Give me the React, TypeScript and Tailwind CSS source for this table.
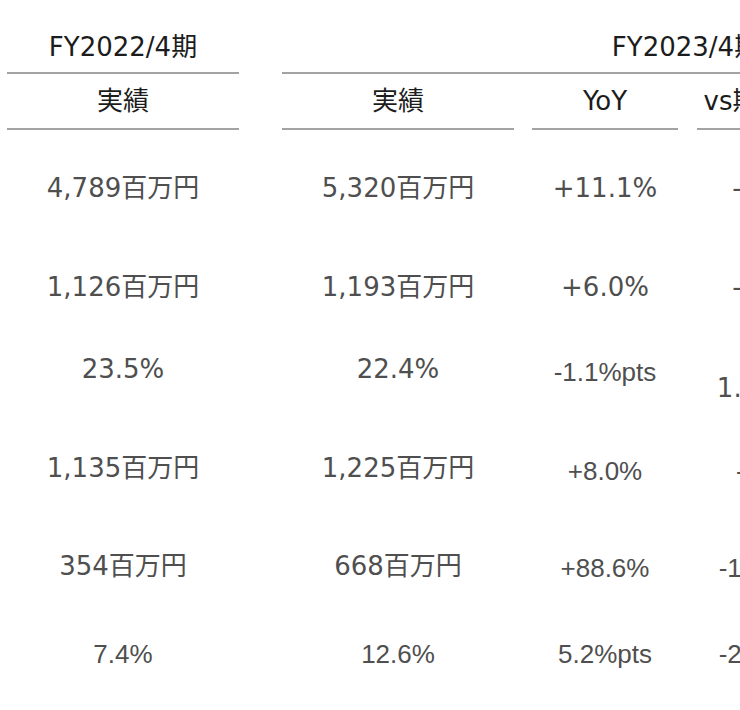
import React from 'react';

type Cell = { text: string; arial?: boolean; extra?: string };

interface Row {
  cls: string;
  cells: Cell[];
}

const rows: Row[] = [
  {
    cls: 'h-[56px] mt-[30px]',
    cells: [
      { text: '4,789百万円' },
      { text: '5,320百万円' },
      { text: '+11.1%' },
      { text: '-3.3%' },
    ],
  },
  {
    cls: 'h-[56px] mt-[43px]',
    cells: [
      { text: '1,126百万円' },
      { text: '1,193百万円' },
      { text: '+6.0%' },
      { text: '-0.6%' },
    ],
  },
  {
    cls: 'h-[56px] mt-[26px]',
    cells: [
      { text: '23.5%' },
      { text: '22.4%' },
      { text: '-1.1%pts', arial: true, extra: 'pt-[6px]' },
      { text: '1.1%pts', extra: 'pt-[38px]' },
    ],
  },
  {
    cls: 'h-[56px] mt-[43px]',
    cells: [
      { text: '1,135百万円' },
      { text: '1,225百万円' },
      { text: '+8.0%', arial: true, extra: 'pt-[6px]' },
      { text: '-2.0%', arial: true, extra: 'pt-[6px]' },
    ],
  },
  {
    cls: 'h-[56px] mt-[42px]',
    cells: [
      { text: '354百万円' },
      { text: '668百万円' },
      { text: '+88.6%', arial: true, extra: 'pt-[4px]' },
      { text: '-1.0%pts', arial: true, extra: 'pt-[4px]' },
    ],
  },
  {
    cls: 'h-[56px] mt-[32px]',
    cells: [
      { text: '7.4%', arial: true },
      { text: '12.6%', arial: true },
      { text: '5.2%pts', arial: true },
      { text: '-2.1%pts', arial: true },
    ],
  },
];

// column widths and left gaps, same for headers and data
const cols = ['w-[232px]', 'ml-[43px] w-[232px]', 'ml-[18px] w-[146px]', 'ml-[19px] w-[146px]'];

const dejavu = "font-['DejaVu_Sans','Noto_Sans_CJK_JP',sans-serif]";
const arialish = "font-['Liberation_Sans','Noto_Sans_CJK_JP',sans-serif]";

export default function App() {
  return (
    <div className={`w-[740px] h-[710px] overflow-hidden bg-white ${dejavu}`}>
      <div className="w-[1200px] pl-[7px] flex flex-col">
        {/* period header */}
        <div className="flex text-[26px] leading-[34px] text-[#1c1c1c]">
          <div className="w-[232px] shrink-0 h-[74px] pt-[30px] text-center border-b-2 border-[#a3a3a3]">
            FY2022/4期
          </div>
          <div className="ml-[43px] w-[808px] shrink-0 h-[74px] pt-[30px] text-center border-b-2 border-[#a3a3a3]">
            FY2023/4期
          </div>
        </div>

        {/* column labels */}
        <div className="flex text-[26px] leading-[34px] text-[#1c1c1c]">
          {['実績', '実績', 'YoY', 'vs期初予想'].map((label, i) => (
            <div
              key={i}
              className={`${cols[i]} shrink-0 h-[56px] flex items-center justify-center whitespace-nowrap border-b-2 border-[#a3a3a3]`}
            >
              {label}
            </div>
          ))}
          <div className="ml-[19px] w-[146px] shrink-0 h-[56px] border-b-2 border-[#a3a3a3]" />
        </div>

        {/* figures */}
        {rows.map((row, r) => (
          <div key={r} className={`flex text-[26px] leading-[34px] text-[#4f4f4f] ${row.cls}`}>
            {row.cells.map((c, i) => (
              <div
                key={i}
                className={`${cols[i]} shrink-0 flex items-center justify-center whitespace-nowrap ${
                  c.arial ? arialish : ''
                } ${c.extra ?? ''}`}
              >
                {c.text}
              </div>
            ))}
          </div>
        ))}
      </div>
    </div>
  );
}
